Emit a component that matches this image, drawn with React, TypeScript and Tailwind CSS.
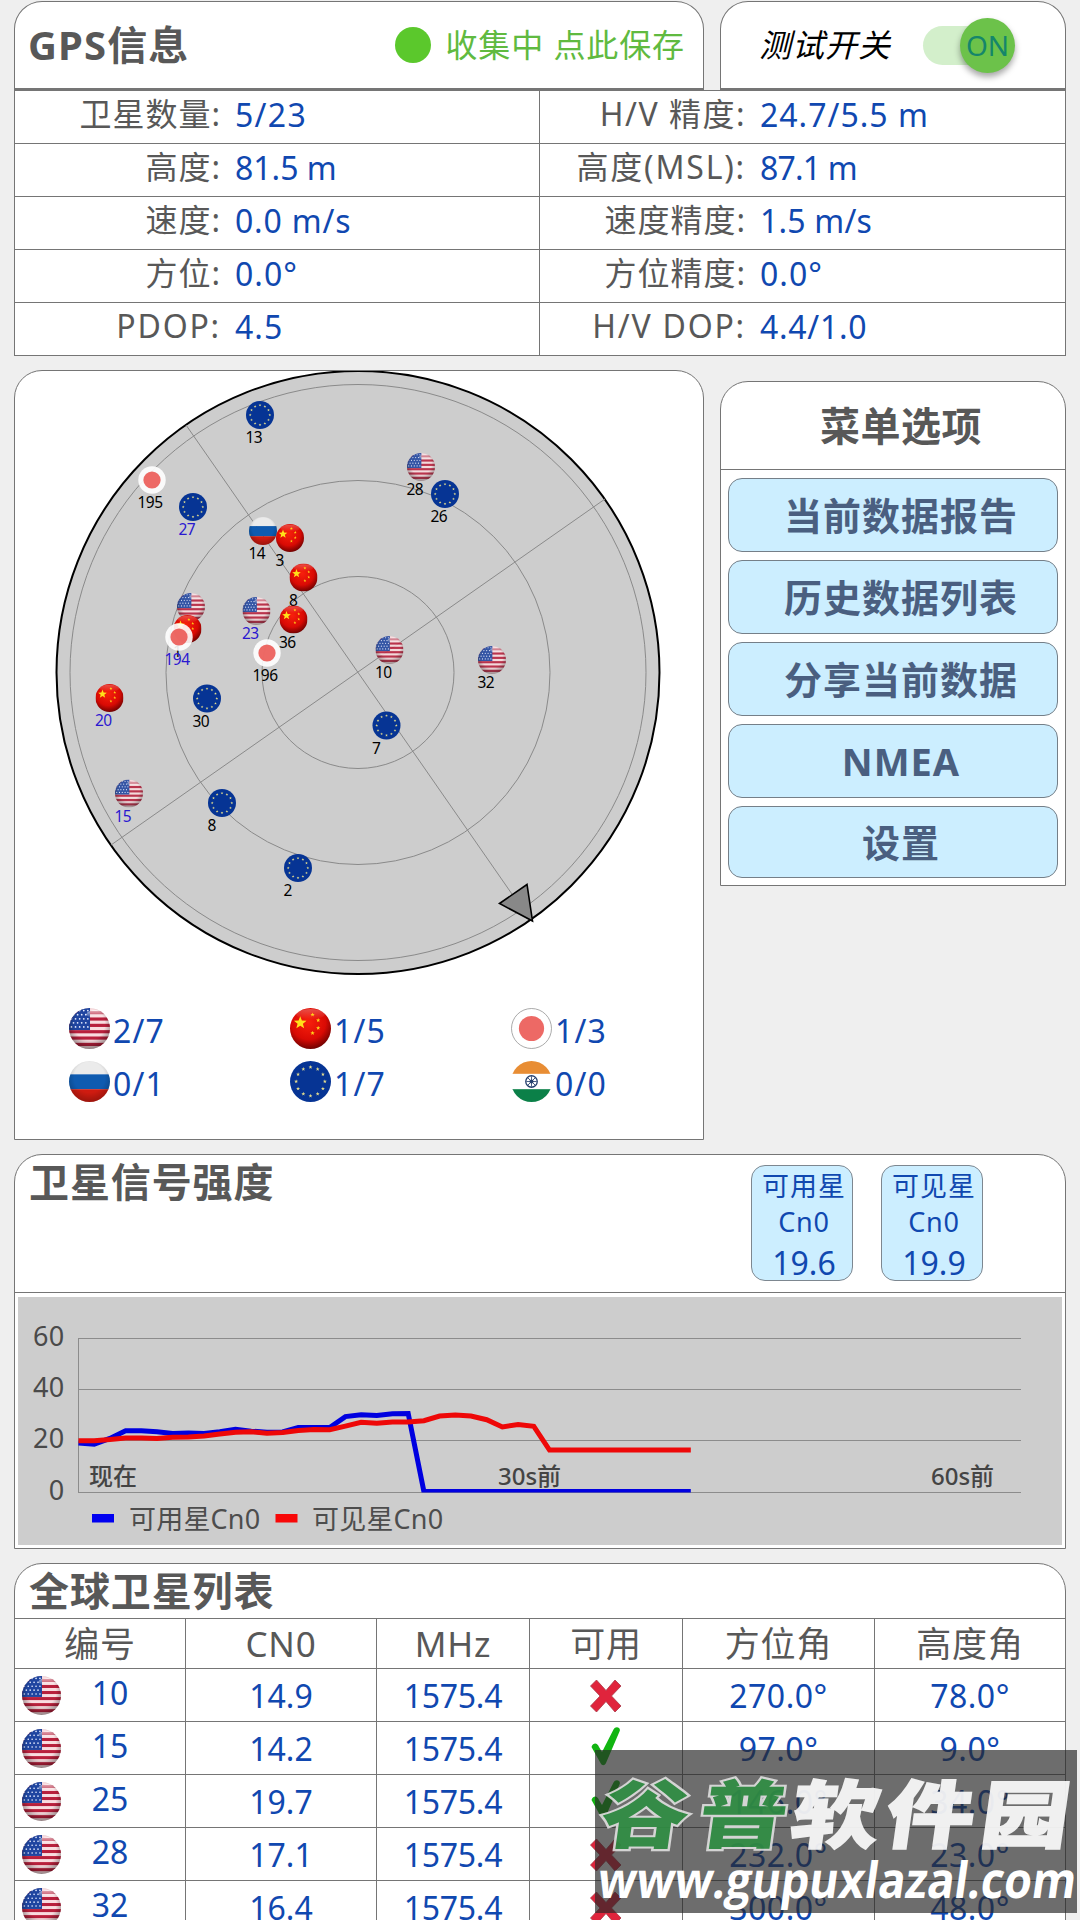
import type { ReactNode } from "react";

type Country = "us" | "cn" | "jp" | "ru" | "eu" | "in";

const INFO_ROWS = [
  [
    { label: "卫星数量:", value: "5/23", labelCls: "tracking-[1px]", valueCls: "tracking-[1.3px]" },
    { label: "H/V 精度:", value: "24.7/5.5 m", labelCls: "tracking-[1.5px]", valueCls: "tracking-[1px]" },
  ],
  [
    { label: "高度:", value: "81.5 m", labelCls: "tracking-[1px]", valueCls: "tracking-normal" },
    { label: "高度(MSL):", value: "87.1 m", labelCls: "tracking-[1.8px]", valueCls: "tracking-[-0.8px]" },
  ],
  [
    { label: "速度:", value: "0.0 m/s", labelCls: "tracking-[1px]", valueCls: "tracking-[0.8px]" },
    { label: "速度精度:", value: "1.5 m/s", labelCls: "tracking-[1px]", valueCls: "tracking-[0.2px]" },
  ],
  [
    { label: "方位:", value: "0.0°", labelCls: "tracking-[1px]", valueCls: "tracking-[1px]" },
    { label: "方位精度:", value: "0.0°", labelCls: "tracking-[1px]", valueCls: "tracking-[1px]" },
  ],
  [
    { label: "PDOP:", value: "4.5", labelCls: "tracking-[1.8px]", valueCls: "tracking-[1px]" },
    { label: "H/V DOP:", value: "4.4/1.0", labelCls: "tracking-[1.8px]", valueCls: "tracking-[0.7px]" },
  ],
];

// x / y are relative to the radar card
const SATELLITES: { c: Country; x: number; y: number; id: string; used?: boolean }[] = [
  { c: "eu", x: 246, y: 45, id: "13" },
  { c: "jp", x: 138, y: 110, id: "195" },
  { c: "eu", x: 179, y: 137, id: "27", used: true },
  { c: "ru", x: 249, y: 161, id: "14" },
  { c: "cn", x: 276, y: 168, id: "3" },
  { c: "cn", x: 289.5, y: 207.5, id: "8" },
  { c: "us", x: 177, y: 237, id: "" },
  { c: "cn", x: 173.5, y: 259, id: "1" },
  { c: "us", x: 242.5, y: 241, id: "23", used: true },
  { c: "cn", x: 279.5, y: 249.5, id: "36" },
  { c: "jp", x: 253, y: 283, id: "196" },
  { c: "jp", x: 165, y: 267, id: "194", used: true },
  { c: "cn", x: 95.5, y: 328, id: "20", used: true },
  { c: "eu", x: 193, y: 328.5, id: "30" },
  { c: "us", x: 407, y: 97, id: "28" },
  { c: "eu", x: 431, y: 124, id: "26" },
  { c: "us", x: 375.5, y: 280, id: "10" },
  { c: "us", x: 478, y: 290, id: "32" },
  { c: "eu", x: 372.5, y: 355.5, id: "7" },
  { c: "us", x: 115, y: 423.5, id: "15", used: true },
  { c: "eu", x: 208, y: 433, id: "8" },
  { c: "eu", x: 284, y: 498, id: "2" },
];

const COUNTS: { c: Country; n: string }[] = [
  { c: "us", n: "2/7" },
  { c: "cn", n: "1/5" },
  { c: "jp", n: "1/3" },
  { c: "ru", n: "0/1" },
  { c: "eu", n: "1/7" },
  { c: "in", n: "0/0" },
];

const MENU = ["当前数据报告", "历史数据列表", "分享当前数据", "NMEA", "设置"];

const USED_CN0 = [
  19, 18.5, 20.8, 23.8, 23.8, 23.4, 22.7, 22.9, 22.7, 23.4, 24.4, 23.6, 23.2, 23.3, 25.1, 25.1, 25, 29.3, 30, 29.7,
  30.4, 30.5, 0, 0, 0, 0, 0, 0, 0, 0, 0, 0, 0, 0, 0, 0, 0, 0, 0, 0,
];
const VISIBLE_CN0 = [
  19.9, 19.9, 20.3, 20.9, 20.9, 20.8, 21.2, 21.3, 21.7, 22.5, 23.2, 23.4, 22.8, 23.1, 23.9, 24.3, 24.2, 25.6, 27.1,
  26.7, 27.2, 27.2, 27.7, 29.5, 29.9, 29.5, 28.1, 25.3, 26.2, 25.5, 16.2, 16.2, 16.2, 16.2, 16.2, 16.2, 16.2, 16.2,
  16.2, 16.2,
];

const COLUMNS = ["编号", "CN0", "MHz", "可用", "方位角", "高度角"];
const LIST = [
  { id: "10", cn0: "14.9", ok: false, az: "270.0°", el: "78.0°" },
  { id: "15", cn0: "14.2", ok: true, az: "97.0°", el: "9.0°" },
  { id: "25", cn0: "19.7", ok: true, az: "146.0°", el: "34.0°" },
  { id: "28", cn0: "17.1", ok: false, az: "232.0°", el: "23.0°" },
  { id: "32", cn0: "16.4", ok: false, az: "300.0°", el: "48.0°" },
];

const GRID = "grid grid-cols-[170px_191px_153px_153px_192px_191px]";

function star(cx: number, cy: number, r: number) {
  const pts: string[] = [];
  for (let i = 0; i < 10; i++) {
    const a = (Math.PI / 5) * i - Math.PI / 2;
    const k = i % 2 ? r * 0.42 : r;
    pts.push(`${(cx + k * Math.cos(a)).toFixed(2)},${(cy + k * Math.sin(a)).toFixed(2)}`);
  }
  return pts.join(" ");
}

function Defs() {
  return (
    <svg className="absolute h-0 w-0">
      <defs>
        <clipPath id="ball">
          <circle cx="20" cy="20" r="20" />
        </clipPath>
        <radialGradient id="shade" cx="0.5" cy="0.4" r="0.62">
          <stop offset="0.6" stopColor="#000" stopOpacity="0" />
          <stop offset="1" stopColor="#000" stopOpacity="0.45" />
        </radialGradient>
        <radialGradient id="redball" cx="0.45" cy="0.35" r="0.7">
          <stop offset="0" stopColor="#f8200c" />
          <stop offset="0.6" stopColor="#d90a04" />
          <stop offset="1" stopColor="#5c0000" />
        </radialGradient>
        <linearGradient id="gloss" x1="0" y1="0" x2="0" y2="1">
          <stop offset="0" stopColor="#fff" stopOpacity="0.65" />
          <stop offset="1" stopColor="#fff" stopOpacity="0" />
        </linearGradient>
      </defs>
    </svg>
  );
}

// every flag is drawn in a 40x40 box
function Flag({ c }: { c: Country }) {
  if (c === "us") {
    return (
      <g clipPath="url(#ball)">
        <rect width="40" height="40" fill="#f9dcdf" />
        {[3, 9.2, 15.4, 21.6, 27.8, 34].map((y) => (
          <rect key={y} y={y} width="40" height="3.1" fill="#b8203c" />
        ))}
        <rect width="20.5" height="21.5" fill="#1f45a0" />
        {[2.5, 6.5, 10.5, 14.5, 18.5].map((y, i) =>
          [2, 6, 10, 14, 18].map((x) => (
            <circle key={x + "-" + y} cx={x + (i % 2 ? -1.6 : 0.4)} cy={y} r="0.85" fill="#e6ecff" />
          ))
        )}
        <ellipse cx="27" cy="6" rx="10" ry="4" fill="url(#gloss)" />
        <rect width="40" height="40" fill="url(#shade)" />
      </g>
    );
  }
  if (c === "cn") {
    return (
      <g clipPath="url(#ball)">
        <rect width="40" height="40" fill="url(#redball)" />
        <ellipse cx="20" cy="6" rx="14" ry="5" fill="url(#gloss)" opacity="0.4" />
        <polygon points={star(10, 14.5, 6.5)} fill="#ffe11a" />
        <polygon points={star(22, 6.5, 2.2)} fill="#ffd21a" />
        <polygon points={star(27.5, 12, 2.2)} fill="#ffd21a" />
        <polygon points={star(27.5, 19.5, 2.2)} fill="#ffd21a" />
        <polygon points={star(22, 24.5, 2.2)} fill="#ffd21a" />
      </g>
    );
  }
  if (c === "jp") {
    return (
      <g>
        <circle cx="20" cy="20" r="19.6" fill="#fff" fillOpacity="0.9" />
        <circle cx="20" cy="20" r="12.3" fill="#ea4f4a" fillOpacity="0.85" />
      </g>
    );
  }
  if (c === "ru") {
    return (
      <g clipPath="url(#ball)">
        <rect width="40" height="13" fill="#ebebeb" />
        <rect y="13" width="40" height="14.5" fill="#0f5bb0" />
        <rect y="27.5" width="40" height="12.5" fill="#cf1b10" />
        <rect width="40" height="40" fill="url(#shade)" opacity="0.6" />
      </g>
    );
  }
  if (c === "eu") {
    return (
      <g>
        <circle cx="20" cy="20" r="20" fill="#063494" />
        {Array.from({ length: 12 }, (_, i) => (
          <polygon
            key={i}
            points={star(20 + 14 * Math.sin((i * Math.PI) / 6), 20 - 14 * Math.cos((i * Math.PI) / 6), 2)}
            fill="#e3dc8e"
          />
        ))}
      </g>
    );
  }
  return (
    <g clipPath="url(#ball)">
      <rect width="40" height="40" fill="#fff" />
      <rect width="40" height="12.5" fill="#e88d34" />
      <rect y="27.5" width="40" height="12.5" fill="#0b8048" />
      <circle cx="20" cy="20" r="5.6" fill="none" stroke="#26406e" strokeWidth="1.3" />
      {[0, 45, 90, 135].map((a) => (
        <line key={a} x1="15" x2="25" y1="20" y2="20" stroke="#26406e" strokeWidth="0.8" transform={`rotate(${a} 20 20)`} />
      ))}
      <circle cx="20" cy="20" r="2" fill="#26406e" />
    </g>
  );
}

function FlagIcon({ c, className }: { c: Country; className: string }) {
  return (
    <svg viewBox="0 0 40 40" className={className}>
      <Flag c={c} />
      {c === "jp" && <circle cx="20" cy="20" r="19.5" fill="none" stroke="#888" strokeWidth="0.7" />}
    </svg>
  );
}

function Radar() {
  return (
    <svg viewBox="0 0 688 606" className="block h-[606px] w-[688px]">
      <g fill="none" transform="translate(-1 -1)">
        <circle cx="344" cy="302.5" r="301.5" fill="#cdcdcd" stroke="#000" strokeWidth="2" />
        <g stroke="#8a8a8a" strokeWidth="1">
          <circle cx="344" cy="302.5" r="288" />
          <circle cx="344" cy="302.5" r="192" />
          <circle cx="344" cy="302.5" r="96" />
          <line x1="172" y1="55" x2="516" y2="550" />
          <line x1="591" y1="129" x2="97" y2="475" />
        </g>
        <polygon points="513,514.5 485.5,533.5 518.5,551" fill="#888" stroke="#000" strokeWidth="1.6" />
        {SATELLITES.map((s, i) => (
          <g key={i}>
            <g transform={`translate(${s.x - 14} ${s.y - 14}) scale(0.7)`} opacity={s.c === "us" ? 0.88 : 1}>
              <Flag c={s.c} />
            </g>
            <text x={s.x - 14.5} y={s.y + 28} fill={s.used ? "#2a18d0" : "#000"} className="text-[15.5px] tracking-[-0.5px]">
              {s.id}
            </text>
          </g>
        ))}
      </g>
    </svg>
  );
}

const px = (i: number) => 60.5 + i * 15.7;
const py = (v: number) => 194.5 - v * 2.555;
const line = (data: number[]) => data.map((v, i) => `${px(i)},${py(v).toFixed(1)}`).join(" ");

function Chart() {
  return (
    <svg viewBox="0 0 1044 248" className="block h-[248px] w-[1044px] bg-[#cdcdcd]">
      <clipPath id="plot">
        <rect x="60" y="0" width="943" height="195.5" />
      </clipPath>
      {[60, 40, 20, 0].map((v) => (
        <g key={v}>
          <line x1="60" x2="1003" y1={Math.round(py(v)) + 0.5} y2={Math.round(py(v)) + 0.5} stroke="#8c8c8c" />
          <text x="46.5" y={py(v) + 8} textAnchor="end" fill="#4a4a4a" className="text-[27px] tracking-[0.3px]">
            {v}
          </text>
        </g>
      ))}
      <line x1="60.5" x2="60.5" y1="41" y2="195" stroke="#8c8c8c" />
      <g fill="#444" className="text-[24px] font-medium">
        <text x="71" y="188">现在</text>
        <text x="480" y="188">30s前</text>
        <text x="913" y="188">60s前</text>
      </g>
      <g clipPath="url(#plot)" fill="none" strokeWidth="5">
        <polyline points={line(USED_CN0)} stroke="#0000e0" />
        <polyline points={line(VISIBLE_CN0)} stroke="#ee0808" />
      </g>
      <rect x="74" y="217" width="22" height="8.5" fill="#0000f0" />
      <rect x="257.5" y="217" width="22" height="8.5" fill="#f80808" />
      <g fill="#4d4d4d" className="text-[27px] tracking-[0.2px]">
        <text x="111" y="231.5">可用星Cn0</text>
        <text x="294" y="231.5">可见星Cn0</text>
      </g>
    </svg>
  );
}

function Badge({ label, value }: { label: string; value: string }) {
  return (
    <div className="flex h-[116px] w-[102px] flex-col items-center rounded-[14px] border border-[#7d8790] bg-[#cceeff] pl-1 text-[#1048b0]">
      <span className="mt-0.5 text-[27px] leading-[36px] tracking-[1px]">{label}</span>
      <span className="text-[27px] leading-[36px] tracking-[0.8px]">Cn0</span>
      <span className="text-[32px] leading-[46px]">{value}</span>
    </div>
  );
}

function Mark({ ok }: { ok: boolean }) {
  if (ok) {
    return (
      <svg viewBox="0 0 30 39" className="-mt-1 h-[39px] w-[30px]">
        <path d="M0.5 20c2-5 6-4 7.500 0l3 5L22.500 2.500c2-4 8-2 6 2L15 36c-1.500 3-4 3-5.500 0Z" fill="#12b512" />
      </svg>
    );
  }
  return (
    <svg viewBox="0 0 32 34" className="mt-0.5 h-[34px] w-[32px]">
      <path d="M6.500 1 16 11.500 25 1l6 6-9.500 10L31 27l-6 6-9-10.500L6.500 33 .500 27 10 17 .500 7Z" fill="#e0243c" stroke="#a83848" strokeWidth="0.8" />
    </svg>
  );
}

function Cell({ children }: { children: ReactNode }) {
  return <div className="flex items-center justify-center border-l border-[#757575]">{children}</div>;
}

export default function App() {
  return (
    <div className="relative h-[1920px] w-[1080px] overflow-hidden bg-[#efefef] pl-[14px] pt-px font-['Noto_Sans','Noto_Sans_CJK_SC',sans-serif] text-[#585858]">
      <Defs />

      {/* header */}
      <div className="flex h-[89px] w-[1052px] gap-4">
        <div className="flex w-[690px] items-center rounded-t-[28px] border border-b-2 border-[#757575] bg-white pl-[13px] pr-[18px]">
          <h1 className="text-[40px] font-bold leading-none tracking-[1.1px]">GPS信息</h1>
          <div className="ml-auto h-9 w-9 rounded-full bg-[#5bc82c]" />
          <span className="ml-3.5 text-[32px] leading-none tracking-[0.9px] text-[#60ba40]">收集中 点此保存</span>
        </div>
        <div className="flex w-[346px] items-center rounded-t-[28px] border border-b-2 border-[#757575] bg-white pl-[38px]">
          <span className="text-[32px] italic leading-none tracking-[1px] text-black">测试开关</span>
          <div className="ml-8 flex h-[39px] w-[90px] items-center justify-end rounded-full bg-[#d3efcb]">
            <div className="-mr-0.5 flex h-[55px] w-[55px] shrink-0 items-center justify-center rounded-full bg-[#6cc24a] text-[28px] leading-none text-[#15866a] shadow-[0_4px_6px_rgba(0,0,0,0.35)]">
              ON
            </div>
          </div>
        </div>
      </div>

      {/* fix details */}
      <div className="w-[1052px] border border-[#757575] bg-white">
        {INFO_ROWS.map((row, i) => (
          <div key={i} className={i ? "flex h-[53px] border-t border-[#757575]" : "flex h-[52px]"}>
            {row.map((f, k) => (
              <div key={k} className={k ? "flex w-[526px] border-l border-[#757575]" : "flex w-[524px]"}>
                <span className={`w-[206px] text-right text-[32px] leading-[46px] ${f.labelCls}`}>{f.label}</span>
                <span className={`pl-[14px] text-[32px] leading-[47px] text-[#1048b0] ${f.valueCls}`}>{f.value}</span>
              </div>
            ))}
          </div>
        ))}
      </div>

      <div className="mt-3.5 flex w-[1052px] items-start gap-4">
        <div className="h-[770px] w-[690px] rounded-t-[28px] border border-[#757575] bg-white">
          <Radar />
          <div className="mt-[31px] grid grid-cols-[221px_221px_221px] gap-y-3 pl-[54px]">
            {COUNTS.map((s) => (
              <div key={s.c} className="flex h-[41px] items-center gap-[3px]">
                <FlagIcon c={s.c} className="h-[41px] w-[41px]" />
                <span className="mt-1 text-[32px] leading-none tracking-[1.2px] text-[#1048b0]">{s.n}</span>
              </div>
            ))}
          </div>
        </div>

        <div className="mt-[11px] h-[505px] w-[346px] rounded-t-[28px] border border-[#757575] bg-white">
          <h2 className="flex h-[88px] items-center justify-center border-b border-[#757575] pl-4 text-[40px] font-bold leading-none tracking-[0.5px]">
            菜单选项
          </h2>
          <div className="flex flex-col gap-2 px-[7px] pt-2">
            {MENU.map((m) => (
              <button
                key={m}
                className="flex h-[74px] items-center justify-center rounded-[14px] border border-[#757f88] bg-[#cceeff] pl-4 text-[38px] font-bold leading-none tracking-[1px] text-[#4a5f80] last:h-[72px]"
              >
                {m}
              </button>
            ))}
          </div>
        </div>
      </div>

      {/* signal strength */}
      <div className="mt-3.5 h-[395px] w-[1052px] rounded-t-[28px] border border-[#757575] bg-white">
        <div className="flex h-[138px] border-b border-[#757575]">
          <h2 className="pl-3.5 pt-[7px] text-[40px] font-bold leading-[40px] tracking-[0.9px]">卫星信号强度</h2>
          <div className="ml-auto mr-[82px] mt-2.5 flex gap-7">
            <Badge label="可用星" value="19.6" />
            <Badge label="可见星" value="19.9" />
          </div>
        </div>
        <div className="px-[3px] pt-1">
          <Chart />
        </div>
      </div>

      {/* satellite list */}
      <div className="mt-3.5 w-[1052px] rounded-t-[28px] border border-[#757575] bg-white">
        <h2 className="h-[54px] pl-3.5 pt-[7px] text-[40px] font-bold leading-[40px] tracking-[0.9px]">全球卫星列表</h2>
        <div className={`${GRID} h-[50px] border-t border-[#757575] text-[35px] leading-none tracking-[0.8px]`}>
          {COLUMNS.map((c, i) => (
            <div
              key={c}
              className={i ? "flex items-center justify-center border-l border-[#757575]" : "flex items-center justify-center"}
            >
              {c}
            </div>
          ))}
        </div>
        {LIST.map((s) => (
          <div key={s.id} className={`${GRID} h-[53px] border-t border-[#757575] text-[32px] leading-none text-[#1048b0]`}>
            <div className="flex items-center pl-[7px]">
              <FlagIcon c="us" className="h-[39px] w-[39px]" />
              <span className="mb-1 w-[98px] text-center">{s.id}</span>
            </div>
            <Cell>
              <span className="mt-0.5">{s.cn0}</span>
            </Cell>
            <Cell>
              <span className="mt-0.5 tracking-[-0.3px]">1575.4</span>
            </Cell>
            <Cell>
              <Mark ok={s.ok} />
            </Cell>
            <Cell>
              <span className="mt-0.5 tracking-[0.5px]">{s.az}</span>
            </Cell>
            <Cell>
              <span className="mt-0.5 tracking-[0.5px]">{s.el}</span>
            </Cell>
          </div>
        ))}
      </div>

      {/* site watermark laid over the list */}
      <div className="absolute left-[595px] top-[1750px] h-[163px] w-[482px] bg-[#282828]/68">
        <svg viewBox="0 0 482 163" className="h-full w-full overflow-visible">
          <g className="text-[88px] font-black" transform="translate(0 92) skewX(-8) scale(1 0.84)">
            <text x="3" y="0" textLength="186" fill="#2f8f43" stroke="#e0e0e0" strokeWidth="5" paintOrder="stroke" opacity="0.9">
              谷普
            </text>
            <text x="193" y="0" textLength="278" fill="#fff" stroke="#fff" strokeWidth="2" opacity="0.9">
              软件园
            </text>
          </g>
          <text
            x="0"
            y="0"
            textLength="478"
            lengthAdjust="spacingAndGlyphs"
            fill="#fff"
            transform="translate(1 148) skewX(-8)"
            className="font-['Open_Sans'] text-[50px] font-bold"
          >
            www.gupuxlazal.com
          </text>
        </svg>
      </div>
    </div>
  );
}
